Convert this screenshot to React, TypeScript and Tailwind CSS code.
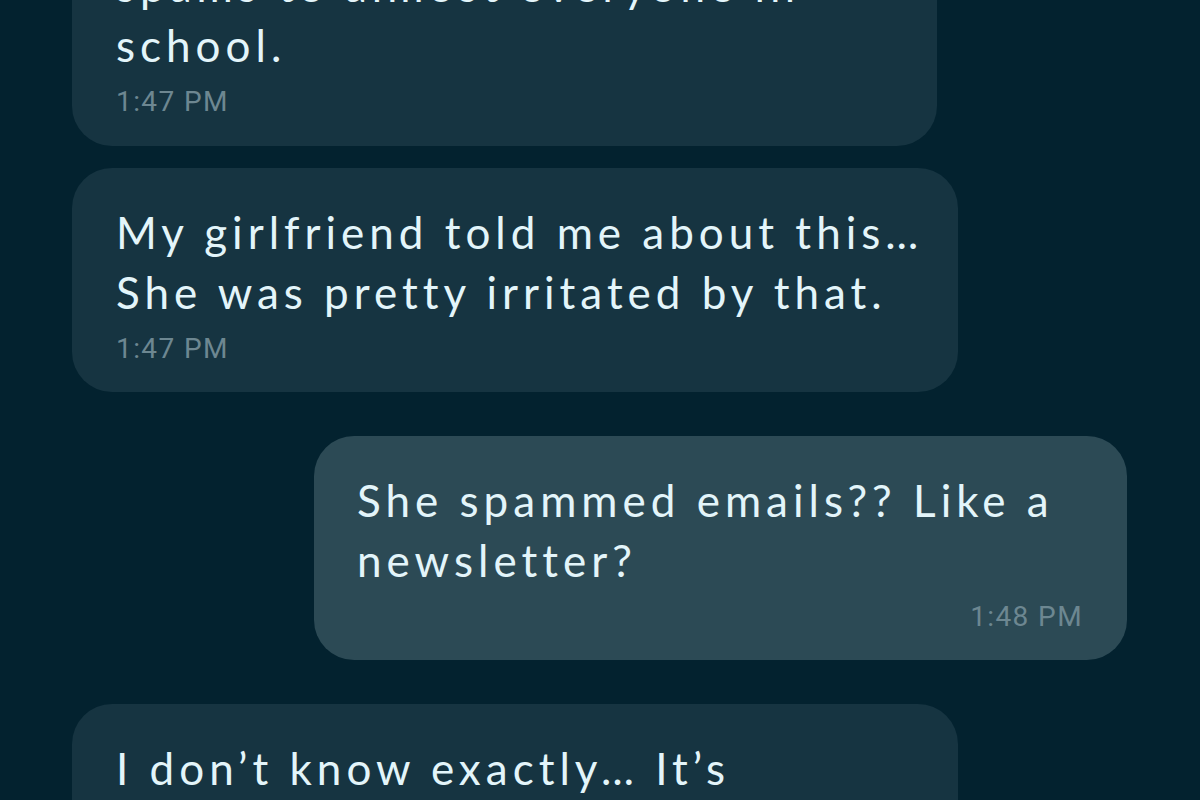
const msgFont = { fontFamily: '"Lato", "Noto Sans", sans-serif' };

type Msg = {
  lines: string[];
  time: string;
  mine?: boolean;
};

const Bubble = ({ lines, time, mine }: Msg) => (
  <>
    <div className="text-[44px] leading-[60px] tracking-[5px] text-[#e3f5fa]" style={msgFont}>
      {lines.map((l, i) => (
        <div key={i} className="whitespace-nowrap">{l}</div>
      ))}
    </div>
    <div
      className={`mt-[14px] text-[28px] leading-[26px] tracking-[1.4px] text-[#6d8791] font-['Roboto',sans-serif] ${mine ? "text-right" : ""}`}
    >
      {time}
    </div>
  </>
);

export default function App() {
  return (
    <div className="w-[1200px] h-[800px] overflow-hidden bg-[#03222f]">
      <div className="-mt-[80px] flex flex-col">
        <div className="ml-[72px] w-[865px] rounded-[40px] bg-[#163441] px-[44px] pt-[35px] pb-[31px]">
          <Bubble lines={["spams to almost everyone in", "school."]} time="1:47 PM" />
        </div>
        <div className="ml-[72px] mt-[22px] w-[886px] rounded-[40px] bg-[#163441] px-[44px] pt-[34px] pb-[30px]">
          <Bubble
            lines={["My girlfriend told me about this…", "She was pretty irritated by that."]}
            time="1:47 PM"
          />
        </div>
        <div className="ml-[314px] mt-[44px] w-[813px] rounded-[40px] bg-[#2c4a55] pl-[43px] pr-[44px] pt-[34px] pb-[30px]">
          <Bubble lines={["She spammed emails?? Like a", "newsletter?"]} time="1:48 PM" mine />
        </div>
        <div className="ml-[72px] mt-[44px] w-[886px] rounded-[40px] bg-[#163441] px-[44px] pt-[34px] pb-[30px]">
          <Bubble lines={["I don’t know exactly… It’s", "something"]} time="1:49 PM" />
        </div>
      </div>
    </div>
  );
}
